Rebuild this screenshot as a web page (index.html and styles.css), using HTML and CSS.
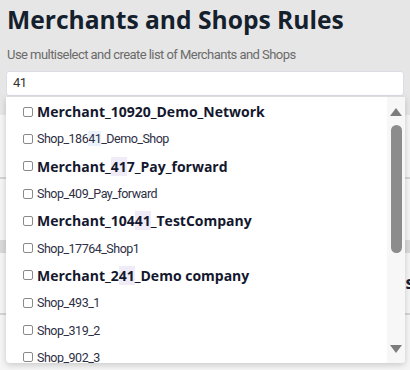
FILE: index.html
```html
<!DOCTYPE html>
<html lang="en">

<head>
    <meta charset="UTF-8" />
    <meta name="viewport" content="width=device-width, initial-scale=1.0" />
    <title>Merchants and Shops Rules</title>
    <link rel="stylesheet" href="styles.css">
</head>

<body>
    <h1>Merchants and Shops Rules</h1>
    <p class="hint">Use multiselect and create list of Merchants and Shops</p>

    <div class="multiselect">
        <div class="search">41</div>

        <div class="dropdown">
            <ul class="options">
                <li class="merchant"><span class="box"></span>Merchant_10920_Demo_Network</li>
                <li class="shop"><span class="box"></span>Shop_186<mark class="alt">41</mark>_Demo_Shop</li>
                <li class="merchant"><span class="box"></span>Merchant_<mark>41</mark>7_Pay_forward</li>
                <li class="shop"><span class="box"></span>Shop_409_Pay_forward</li>
                <li class="merchant"><span class="box"></span>Merchant_104<mark>41</mark>_TestCompany</li>
                <li class="shop"><span class="box"></span>Shop_17764_Shop1</li>
                <li class="merchant"><span class="box"></span>Merchant_2<mark>41</mark>_Demo company</li>
                <li class="shop"><span class="box"></span>Shop_493_1</li>
                <li class="shop"><span class="box"></span>Shop_319_2</li>
                <li class="shop"><span class="box"></span>Shop_902_3</li>
            </ul>
            <div class="scrollbar">
                <span class="arrow up"></span>
                <span class="thumb"></span>
                <span class="arrow down"></span>
            </div>
        </div>
    </div>

    <!-- page content that sits under the open dropdown -->
    <div class="backdrop">
        <div class="row"></div>
        <div class="line"></div>
        <div class="band"></div>
        <div class="heading">Shops</div>
        <div class="line"></div>
        <div class="row"></div>
    </div>
</body>

</html>
```

FILE: styles.css
```css
html {
    height: 100%;
    overflow: hidden;
}

body {
    margin: 0;
    padding: 0 6px;
    background-color: #e6e6e6;
    font-family: 'Roboto', sans-serif;
}

h1 {
    margin: 0;
    padding: 3px 0 0 1px;
    font-family: 'Open Sans', sans-serif;
    font-size: 24.6px;
    font-weight: 700;
    line-height: 34px;
    white-space: nowrap;
    color: #15202d;
}

.hint {
    margin: 10px 0 8px 1px;
    font-size: 13px;
    line-height: 16px;
    letter-spacing: -0.55px;
    color: #6b6b6b;
}

.multiselect {
    position: relative;
}

.search {
    height: 23px;
    padding: 0 6px;
    border: 1px solid #dcdbe6;
    border-radius: 3px;
    background-color: #ffffff;
    font-size: 13px;
    line-height: 22px;
    letter-spacing: -0.5px;
    color: #333333;
}

.dropdown {
    position: absolute;
    top: 26px;
    left: 0;
    right: -1px;
    height: 266px;
    display: flex;
    background-color: #ffffff;
    border-radius: 0 0 4px 4px;
    box-shadow: 0 2px 6px rgba(0, 0, 0, 0.18);
    overflow: hidden;
    z-index: 2;
}

.options {
    flex: 1;
    margin: 0;
    padding: 1px 0 0 17px;
    list-style: none;
}

.options li {
    display: flex;
    align-items: center;
    height: 27.3px;
    white-space: nowrap;
}

.merchant {
    font-family: 'Open Sans', sans-serif;
    font-size: 14px;
    font-weight: 700;
    color: #14182e;
}

.shop {
    font-size: 12.5px;
    letter-spacing: -0.5px;
    color: #2e2f45;
}

.box {
    width: 8px;
    height: 8px;
    margin-right: 4px;
    border: 1px solid #8a8a8a;
    border-radius: 2px;
    flex-shrink: 0;
}

mark {
    background-color: #efebf7;
    color: inherit;
}

mark.alt {
    background-color: #eaf2fb;
}

.scrollbar {
    width: 18px;
    display: flex;
    flex-direction: column;
    align-items: center;
    padding: 11px 0 10px;
    background-color: #f7f7f7;
}

.arrow {
    width: 0;
    height: 0;
    border-left: 6.5px solid transparent;
    border-right: 6.5px solid transparent;
}

.arrow.up {
    border-bottom: 8px solid #7d7d7d;
}

.arrow.down {
    margin-top: auto;
    border-top: 8px solid #7d7d7d;
}

.thumb {
    width: 11px;
    height: 128px;
    margin-top: 9px;
    border-radius: 6px;
    background-color: #8c8c8c;
}

.backdrop {
    margin: 19px -6px 0;
    background-color: #f5f5f5;
}

.backdrop .row {
    height: 62px;
}

.backdrop .line {
    height: 2px;
    background-color: #d4d4d4;
}

.backdrop .band {
    height: 13px;
    margin-top: 61px;
    background-color: #d9d9d9;
}

.backdrop .heading {
    height: 60px;
    padding-top: 20px;
    box-sizing: border-box;
    margin-right: -4px;
    text-align: right;
    font-family: 'Open Sans', sans-serif;
    font-size: 17px;
    font-weight: 700;
    line-height: 20px;
    color: #1a1d33;
}
```
